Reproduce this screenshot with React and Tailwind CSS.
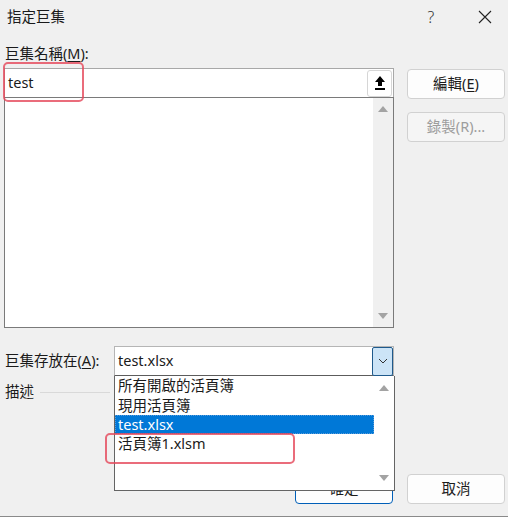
import React from 'react'

const font = "font-['Noto_Sans','Noto_Sans_CJK_TC',sans-serif]"

function Tri({ down = false, className = '' }) {
  return (
    <svg width="12" height="8" viewBox="0 0 12 8" className={className}>
      {down ? <path d="M1 1 L11 1 L6 7 Z" fill="#a3a3a3" /> : <path d="M1 7 L11 7 L6 1 Z" fill="#a3a3a3" />}
    </svg>
  )
}

function Btn({ children, disabled = false, primary = false }) {
  return (
    <div
      className={`w-[98px] h-[30px] flex items-center justify-center rounded-[4px] border ${
        primary ? 'border-[#005fb8]' : 'border-[#d1d1d1]'
      } ${disabled ? 'bg-[#f5f5f5] text-[#9d9d9d]' : 'bg-[#fdfdfd] text-[#1b1b1b]'}`}
    >
      {children}
    </div>
  )
}

export default function App() {
  return (
    <div className={`relative w-[508px] h-[517px] bg-[#f0f0f0] text-[14.5px] text-[#1a1a1a] border-b border-[#8a8a8a] overflow-hidden ${font}`}>
      {/* Title bar */}
      <div className="h-[33px] flex items-center pl-[7px]">
        <span className="flex-1 leading-none">指定巨集</span>
        <span className="w-[20px] text-center text-[16px] font-light text-[#333] mr-[37px]">?</span>
        <svg width="14" height="14" viewBox="0 0 14 14" className="mr-[16px]">
          <path d="M1 1 L13 13 M13 1 L1 13" stroke="#222" strokeWidth="1.1" />
        </svg>
      </div>

      <div className="pl-[4px] pr-[3px]">
        <div className="flex">
          {/* left column */}
          <div className="w-[390px] flex flex-col">
            <div className="h-[20px] mt-[11px] mb-[4px] pl-[1px] flex items-center">
              巨集名稱(<span className="underline underline-offset-2">M</span>):
            </div>
            <div className="h-[29px] bg-white border-t border-x border-[#a8a8a8] flex items-center pl-[3px] pr-[1px]">
              <span className="flex-1">test</span>
              <div className="w-[25px] h-[27px] rounded-[3px] border border-[#d6d6d6] bg-white flex items-center justify-center">
                <svg width="12" height="16" viewBox="0 0 12 16">
                  <path d="M6 1 L11 7 L8 7 L8 11 L4 11 L4 7 L1 7 Z" fill="#000" />
                  <rect x="1" y="13" width="10" height="2" fill="#000" />
                </svg>
              </div>
            </div>
            <div className="h-[231px] bg-white border border-[#7a7a7a] flex justify-end">
              <div className="w-[20px] bg-[#f0f0f0] flex flex-col items-center justify-between py-[7px]">
                <Tri />
                <Tri down />
              </div>
            </div>
          </div>
          {/* right column */}
          <div className="ml-[13px] mt-[36px] flex flex-col gap-[13px]">
            <Btn>
              編輯(<span className="underline underline-offset-2">E</span>)
            </Btn>
            <Btn disabled>錄製(R)...</Btn>
          </div>
        </div>

        {/* store in row */}
        <div className="flex items-center mt-[18px]">
          <div className="w-[110px] pl-[1px]">
            巨集存放在(<span className="underline underline-offset-2">A</span>):
          </div>
          <div className="w-[280px] h-[30px] bg-white border border-[#b5b5b5] border-b-[#5c5c5c] flex items-center pl-[3px]">
            <span className="flex-1">test.xlsx</span>
            <div className="w-[21px] h-[29px] bg-[#cce4f7] border border-[#1f5a8c] rounded-[2px] flex items-center justify-center">
              <svg width="10" height="6" viewBox="0 0 10 6">
                <path d="M1 1 L5 5 L9 1" fill="none" stroke="#333" strokeWidth="1" />
              </svg>
            </div>
          </div>
        </div>

        {/* description */}
        <div className="h-[20px] mt-[6px] flex items-center pl-[1px]">
          <span>描述</span>
          <div className="ml-[6px] w-[70px] h-px bg-[#d9d9d9]" />
        </div>

        {/* bottom buttons */}
        <div className="mt-[72px] flex justify-end gap-[14px]">
          <Btn primary>確定</Btn>
          <Btn>取消</Btn>
        </div>
      </div>

      {/* open dropdown list */}
      <div className="absolute left-[114px] top-[376px] w-[281px] h-[115px] bg-white border border-[#646464] border-t-0 flex">
        <div className="flex-1 flex flex-col">
          <div className="h-[20px] pl-[3px] flex items-center">所有開啟的活頁簿</div>
          <div className="h-[19px] pl-[3px] flex items-center">現用活頁簿</div>
          <div className="h-[19px] pl-[3px] flex items-center bg-[#0078d7] text-white outline outline-1 outline-dotted outline-[#5a9bd8] -outline-offset-1">
            test.xlsx
          </div>
          <div className="h-[19px] pl-[3px] flex items-center">活頁簿1.xlsm</div>
        </div>
        <div className="w-[20px] flex flex-col items-center justify-between py-[8px]">
          <Tri />
          <Tri down />
        </div>
      </div>

      {/* red annotations */}
      <div className="absolute left-[3px] top-[62px] w-[81px] h-[40px] rounded-[5px] border-[2.5px] border-[#e5475a]/80" />
      <div className="absolute left-[105px] top-[433px] w-[190px] h-[31px] rounded-[5px] border-[2.5px] border-[#e5475a]/80" />
    </div>
  )
}
